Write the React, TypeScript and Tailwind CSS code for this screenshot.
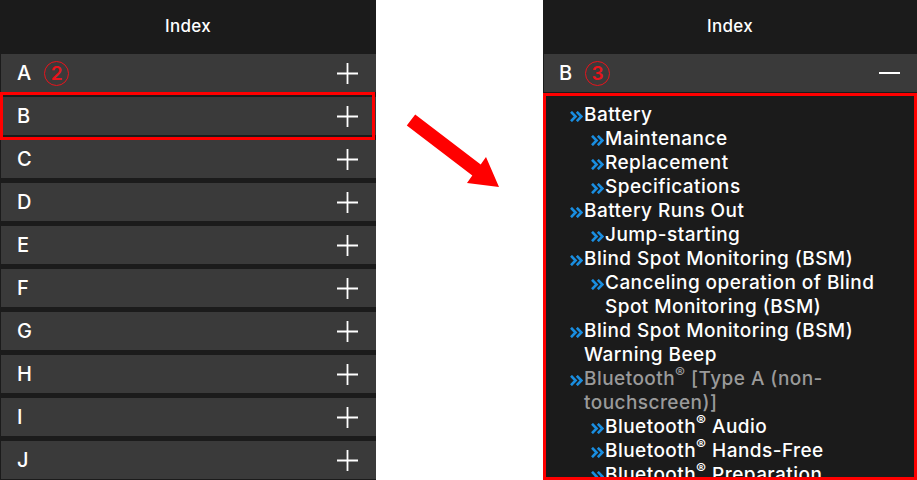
const LETTERS = ["A", "B", "C", "D", "E", "F", "G", "H", "I", "J"];

type Entry = { level: 1 | 2; lines: React.ReactNode[]; muted?: boolean };

const Reg = () => (
  <span className="relative -top-[7px] text-[15px] leading-none">®</span>
);

const ENTRIES: Entry[] = [
  { level: 1, lines: ["Battery"] },
  { level: 2, lines: ["Maintenance"] },
  { level: 2, lines: ["Replacement"] },
  { level: 2, lines: ["Specifications"] },
  { level: 1, lines: ["Battery Runs Out"] },
  { level: 2, lines: ["Jump-starting"] },
  { level: 1, lines: ["Blind Spot Monitoring (BSM)"] },
  { level: 2, lines: ["Canceling operation of Blind", "Spot Monitoring (BSM)"] },
  { level: 1, lines: ["Blind Spot Monitoring (BSM)", "Warning Beep"] },
  {
    level: 1,
    muted: true,
    lines: [<>Bluetooth<Reg /> [Type A (non-</>, "touchscreen)]"],
  },
  { level: 2, lines: [<>Bluetooth<Reg /> Audio</>] },
  { level: 2, lines: [<>Bluetooth<Reg /> Hands-Free</>] },
  { level: 2, lines: [<>Bluetooth<Reg /> Preparation</>] },
];

function Plus() {
  return (
    <svg width="21" height="21" viewBox="0 0 21 21" className="block">
      <path d="M0 10.5H21M10.5 0V21" stroke="#fff" strokeWidth="1.8" />
    </svg>
  );
}

function Minus() {
  return (
    <svg width="21" height="4" viewBox="0 0 21 4" className="block">
      <path d="M0 2H21" stroke="#fff" strokeWidth="2" />
    </svg>
  );
}

function Chevrons() {
  return (
    <svg width="13" height="11" viewBox="0 0 13 11" className="block">
      <path
        d="M1 0.8L5.6 5.5L1 10.2M6.8 0.8L11.4 5.5L6.8 10.2"
        fill="none"
        stroke="#1a8ee0"
        strokeWidth="2.6"
      />
    </svg>
  );
}

function Circled({ n }: { n: number }) {
  return (
    <span className="ml-[13px] inline-flex h-[25px] w-[25px] items-center justify-center rounded-full border-[1.5px] border-[#e8141c] text-[19px] font-semibold leading-none text-[#e8141c]">
      {n}
    </span>
  );
}

function Header() {
  return (
    <div className="flex h-[54px] shrink-0 items-center justify-center bg-[#1b1b1b] text-[17px] font-medium tracking-[0.3px] text-white">
      Index
    </div>
  );
}

export default function App() {
  return (
    <div
      className="flex h-[480px] w-[917px] overflow-hidden bg-white"
      style={{ fontFamily: "Inter, 'Noto Sans', sans-serif" }}
    >
      {/* collapsed index */}
      <div className="relative flex w-[376px] shrink-0 flex-col bg-[#1b1b1b]">
        <Header />
        <div className="flex flex-col gap-[5px]">
          {LETTERS.map((l) => (
            <div
              key={l}
              className="flex h-[38px] items-center border-l border-[#1b1b1b] bg-[#3a3a3a] pl-[16px] pr-[18px] text-[20px] font-medium text-white"
            >
              <span>{l}</span>
              {l === "A" && <Circled n={2} />}
              <span className="ml-auto">
                <Plus />
              </span>
            </div>
          ))}
        </div>
        <div className="absolute left-0 top-[92px] h-[48px] w-[375px] border-[3px] border-[#ff0000]" />
      </div>

      {/* arrow */}
      <div className="w-[167px] shrink-0">
        <svg width="167" height="200" viewBox="0 0 167 200" className="block">
          <polygon
            points="39.2,114.4 104.7,164.4 110,157 123,187 91,183 96.3,175.6 30.8,125.6"
            fill="#ff0000"
          />
        </svg>
      </div>

      {/* expanded index */}
      <div className="flex w-[374px] shrink-0 flex-col bg-[#1b1b1b]">
        <Header />
        <div className="flex h-[38px] shrink-0 items-center border-l border-[#1b1b1b] bg-[#3a3a3a] pl-[15px] pr-[17px] text-[20px] font-medium text-white">
          <span>B</span>
          <Circled n={3} />
          <span className="ml-auto">
            <Minus />
          </span>
        </div>
        <div className="mt-px flex-1 overflow-hidden border-[3px] border-[#ff0000] bg-[#1b1b1b] pl-[24px] pt-[7px]">
          {ENTRIES.map((e, i) => (
            <div
              key={i}
              className={`flex items-start ${e.level === 2 ? "pl-[21px]" : ""}`}
            >
              <span className="mt-[8px] w-[14px] shrink-0">
                <Chevrons />
              </span>
              <div
                className={`whitespace-nowrap text-[19px] font-medium leading-[24px] tracking-[0.45px] ${
                  e.muted ? "text-[#9a9a9a]" : "text-white"
                }`}
              >
                {e.lines.map((line, j) => (
                  <div key={j}>{line}</div>
                ))}
              </div>
            </div>
          ))}
        </div>
      </div>
    </div>
  );
}
